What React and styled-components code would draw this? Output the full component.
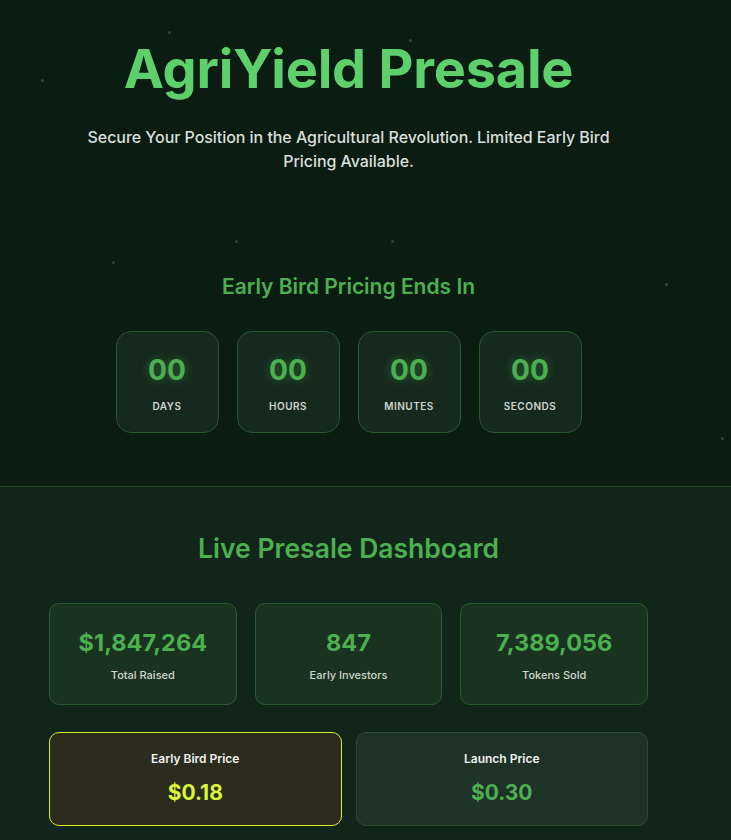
import React from "react";
import styled, { createGlobalStyle } from "styled-components";

const Global = createGlobalStyle`
  html, body { margin: 0; padding: 0; background: #0b1d13; }
  body { font-family: Inter, "Noto Sans", Arial, sans-serif; -webkit-font-smoothing: antialiased; }
  * { box-sizing: border-box; }
`;

const Page = styled.div`
  min-height: 840px;
  background: #12251a;
  overflow: hidden;
`;

const Hero = styled.section`
  position: relative;
  background: #0b1d13;
  padding: 36px 34px 53px 0;
  border-bottom: 1px solid #1f4a27;
`;

const Dot = styled.span`
  position: absolute;
  width: 3px;
  height: 3px;
  border-radius: 50%;
  background: #2a5a34;
  opacity: 0.8;
`;

const Inner = styled.div`
  width: 599px;
  margin: 0 auto;
  display: flex;
  flex-direction: column;
  align-items: center;
  position: relative;
`;

const Title = styled.h1`
  margin: 0;
  font-size: 54px;
  line-height: 66px;
  font-weight: 700;
  color: #5dd06b;
  letter-spacing: -0.2px;
`;

const Subtitle = styled.p`
  margin: 23px 0 0;
  width: 540px;
  text-align: center;
  font-size: 16px;
  line-height: 24px;
  font-weight: 500;
  letter-spacing: -0.05px;
  color: #d9dfda;
`;

const SectionHeading = styled.h2`
  margin: ${(p) => p.$mt}px 0 0;
  font-size: ${(p) => p.$size}px;
  line-height: 30px;
  font-weight: 600;
  color: #4caf50;
`;

const CountRow = styled.div`
  display: flex;
  gap: 18px;
  margin-top: 29px;
`;

const CountBox = styled.div`
  width: 103px;
  height: 102px;
  border-radius: 15px;
  border: 1px solid #255a2c;
  background: #16291e;
  display: flex;
  flex-direction: column;
  align-items: center;
  padding-top: 21px;
`;

const CountNum = styled.div`
  font-size: 28px;
  line-height: 34px;
  font-weight: 700;
  color: #4caf50;
  text-shadow: 0 0 10px rgba(76, 175, 80, 0.45);
`;

const CountLabel = styled.div`
  margin-top: 12px;
  font-size: 10px;
  line-height: 14px;
  font-weight: 600;
  letter-spacing: 0.5px;
  color: #cfd5d0;
  text-transform: uppercase;
`;

const Dashboard = styled.section`
  padding: 46px 34px 20px 0;
`;

const StatGrid = styled.div`
  width: 100%;
  display: grid;
  grid-template-columns: repeat(3, 1fr);
  gap: 18px;
  margin-top: 40px;
`;

const StatCard = styled.div`
  height: 102px;
  border-radius: 10px;
  border: 1px solid #2a5a2f;
  background: #1a3320;
  display: flex;
  flex-direction: column;
  align-items: center;
  padding-top: 24px;
`;

const StatNum = styled.div`
  font-size: 23.5px;
  line-height: 30px;
  font-weight: 700;
  color: #4caf50;
`;

const StatLabel = styled.div`
  margin-top: 10px;
  font-size: 11px;
  line-height: 14px;
  font-weight: 500;
  color: #cfd5d0;
`;

const PriceGrid = styled.div`
  width: 100%;
  display: grid;
  grid-template-columns: 1fr 1fr;
  gap: 14px;
  margin-top: 27px;
`;

const PriceCard = styled.div`
  height: 94px;
  border-radius: 10px;
  border: 1px solid ${(p) => (p.$early ? "#d4f02a" : "#2a4d30")};
  background: ${(p) => (p.$early ? "#2b2c1d" : "#1f3227")};
  display: flex;
  flex-direction: column;
  align-items: center;
  padding-top: 18px;
`;

const PriceTitle = styled.div`
  font-size: 12px;
  line-height: 16px;
  font-weight: 600;
  color: #f0f2f0;
`;

const PriceValue = styled.div`
  margin-top: 12px;
  font-size: 21px;
  line-height: 28px;
  font-weight: 700;
  color: ${(p) => (p.$early ? "#d8f53a" : "#4caf50")};
`;

const dots = [
  [169, 32], [410, 40], [42, 80], [236, 241], [392, 241], [113, 262], [666, 284], [722, 438],
];

const countdown = ["Days", "Hours", "Minutes", "Seconds"];
const stats = [
  ["$1,847,264", "Total Raised"],
  ["847", "Early Investors"],
  ["7,389,056", "Tokens Sold"],
];

export default function App() {
  return (
    <Page>
      <Global />
      <Hero>
        {dots.map(([x, y], i) => (
          <Dot key={i} style={{ left: x - 1, top: y - 1 }} />
        ))}
        <Inner>
          <Title>AgriYield Presale</Title>
          <Subtitle>
            Secure Your Position in the Agricultural Revolution. Limited Early Bird Pricing Available.
          </Subtitle>
          <SectionHeading $mt={99} $size={21}>Early Bird Pricing Ends In</SectionHeading>
          <CountRow>
            {countdown.map((c) => (
              <CountBox key={c}>
                <CountNum>00</CountNum>
                <CountLabel>{c}</CountLabel>
              </CountBox>
            ))}
          </CountRow>
        </Inner>
      </Hero>
      <Dashboard>
        <Inner>
          <SectionHeading $mt={0} $size={26.5}>Live Presale Dashboard</SectionHeading>
          <StatGrid>
            {stats.map(([n, l]) => (
              <StatCard key={l}>
                <StatNum>{n}</StatNum>
                <StatLabel>{l}</StatLabel>
              </StatCard>
            ))}
          </StatGrid>
          <PriceGrid>
            <PriceCard $early>
              <PriceTitle>Early Bird Price</PriceTitle>
              <PriceValue $early>$0.18</PriceValue>
            </PriceCard>
            <PriceCard>
              <PriceTitle>Launch Price</PriceTitle>
              <PriceValue>$0.30</PriceValue>
            </PriceCard>
          </PriceGrid>
        </Inner>
      </Dashboard>
    </Page>
  );
}
